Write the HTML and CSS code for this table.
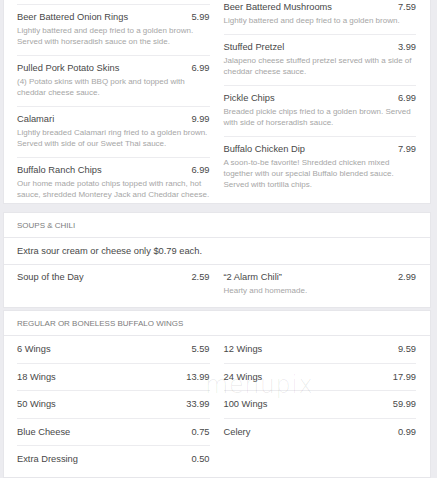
FILE: index.html
```html
<!DOCTYPE html>
<html lang="en">
<head>
<meta charset="utf-8">
<title>Menu</title>
<link rel="stylesheet" href="styles.css">
</head>
<body>
<main class="page">
  <section class="card card--top">
    <div class="cols">
      <ul class="col col--offset">
        <li class="item">
          <div class="item-head"><span>Beer Battered Onion Rings</span><span>5.99</span></div>
          <p class="item-desc">Lightly battered and deep fried to a golden brown. Served with horseradish sauce on the side.</p>
        </li>
        <li class="item">
          <div class="item-head"><span>Pulled Pork Potato Skins</span><span>6.99</span></div>
          <p class="item-desc">(4) Potato skins with BBQ pork and topped with cheddar cheese sauce.</p>
        </li>
        <li class="item">
          <div class="item-head"><span>Calamari</span><span>9.99</span></div>
          <p class="item-desc">Lightly breaded Calamari ring fried to a golden brown. Served with side of our Sweet Thai sauce.</p>
        </li>
        <li class="item">
          <div class="item-head"><span>Buffalo Ranch Chips</span><span>6.99</span></div>
          <p class="item-desc">Our home made potato chips topped with ranch, hot sauce, shredded Monterey Jack and Cheddar cheese.</p>
        </li>
      </ul>
      <ul class="col">
        <li class="item">
          <div class="item-head"><span>Beer Battered Mushrooms</span><span>7.59</span></div>
          <p class="item-desc">Lightly battered and deep fried to a golden brown.</p>
        </li>
        <li class="item">
          <div class="item-head"><span>Stuffed Pretzel</span><span>3.99</span></div>
          <p class="item-desc">Jalapeno cheese stuffed pretzel served with a side of cheddar cheese sauce.</p>
        </li>
        <li class="item">
          <div class="item-head"><span>Pickle Chips</span><span>6.99</span></div>
          <p class="item-desc">Breaded pickle chips fried to a golden brown. Served with side of horseradish sauce.</p>
        </li>
        <li class="item">
          <div class="item-head"><span>Buffalo Chicken Dip</span><span>7.99</span></div>
          <p class="item-desc">A soon-to-be favorite! Shredded chicken mixed together with our special Buffalo blended sauce. Served with tortilla chips.</p>
        </li>
      </ul>
    </div>
  </section>

  <section class="card card--soups">
    <h2 class="card-title">Soups &amp; Chili</h2>
    <p class="card-note">Extra sour cream or cheese only $0.79 each.</p>
    <div class="cols">
      <ul class="col">
        <li class="item">
          <div class="item-head"><span>Soup of the Day</span><span>2.59</span></div>
        </li>
      </ul>
      <ul class="col">
        <li class="item">
          <div class="item-head"><span>“2 Alarm Chili”</span><span>2.99</span></div>
          <p class="item-desc">Hearty and homemade.</p>
        </li>
      </ul>
    </div>
  </section>

  <section class="card card--wings">
    <h2 class="card-title">Regular or Boneless Buffalo Wings</h2>
    <div class="cols">
      <ul class="col">
        <li class="row"><span>6 Wings</span><span>5.59</span></li>
        <li class="row"><span>18 Wings</span><span>13.99</span></li>
        <li class="row"><span>50 Wings</span><span>33.99</span></li>
        <li class="row"><span>Blue Cheese</span><span>0.75</span></li>
        <li class="row"><span>Extra Dressing</span><span>0.50</span></li>
      </ul>
      <ul class="col">
        <li class="row"><span>12 Wings</span><span>9.59</span></li>
        <li class="row"><span>24 Wings</span><span>17.99</span></li>
        <li class="row"><span>100 Wings</span><span>59.99</span></li>
        <li class="row"><span>Celery</span><span>0.99</span></li>
      </ul>
    </div>
  </section>
</main>
<div class="watermark" aria-hidden="true">menupix</div>
</body>
</html>
```
FILE: styles.css
```css
* { box-sizing: border-box; }

html, body {
  margin: 0;
  padding: 0;
}

body {
  background: #ececf0;
  font-family: "Liberation Sans", Arial, sans-serif;
  color: #4a4a4a;
  overflow: hidden;
  height: 478px;
  position: relative;
}

.page {
  width: 430px;
  padding-left: 4px;
  display: flex;
  flex-direction: column;
}

.card {
  background: #fff;
  box-shadow: 0 0 0 1px #e6e6ea;
}

.card--top {
  margin-top: -5px;
  padding: 0 14px 0 13px;
}

.card--soups {
  margin-top: 10px;
}

.card--wings {
  margin-top: 4px;
  padding-bottom: 4px;
}

.cols {
  display: flex;
  gap: 14px;
}

.card--soups .cols,
.card--wings .cols {
  padding: 0 14px 0 13px;
}

.col {
  list-style: none;
  margin: 0;
  padding: 0;
  flex: 1 1 0;
  min-width: 0;
}

.col--offset {
  padding-top: 9px;
}

.col--offset .item:first-child {
  border-top: 1px solid #ececef;
}

.item {
  padding: 6px 0 8px;
  border-bottom: 1px solid #ececef;
}

.item:last-child {
  border-bottom: 0;
  padding-bottom: 3px;
}

.item-head {
  display: flex;
  justify-content: space-between;
  font-size: 9.3px;
  line-height: 12px;
  color: #484848;
}

.item-desc {
  margin: 2px 0 0;
  font-size: 8px;
  line-height: 11px;
  color: #a6a6a6;
}

.card--soups .item {
  padding-top: 6px;
  padding-bottom: 11px;
}

.card-title {
  margin: 0;
  padding: 7px 13px 5px;
  font-size: 8px;
  line-height: 12px;
  font-weight: normal;
  text-transform: uppercase;
  color: #7c7c7c;
  border-bottom: 1px solid #e8e8ec;
}

.card-note {
  margin: 0;
  padding: 7px 13px 7px;
  font-size: 9.3px;
  line-height: 12px;
  color: #484848;
  border-bottom: 1px solid #e8e8ec;
}

.row {
  display: flex;
  justify-content: space-between;
  padding: 7px 0 7.5px;
  font-size: 9.3px;
  line-height: 12px;
  color: #484848;
  border-bottom: 1px solid #ececef;
}

.row:last-child {
  border-bottom: 0;
}

.watermark {
  position: absolute;
  left: 205px;
  top: 371px;
  font-family: "DejaVu Sans", sans-serif;
  font-weight: 200;
  font-size: 24px;
  letter-spacing: 0.5px;
  color: rgba(0, 0, 0, 0.08);
  pointer-events: none;
}
```
